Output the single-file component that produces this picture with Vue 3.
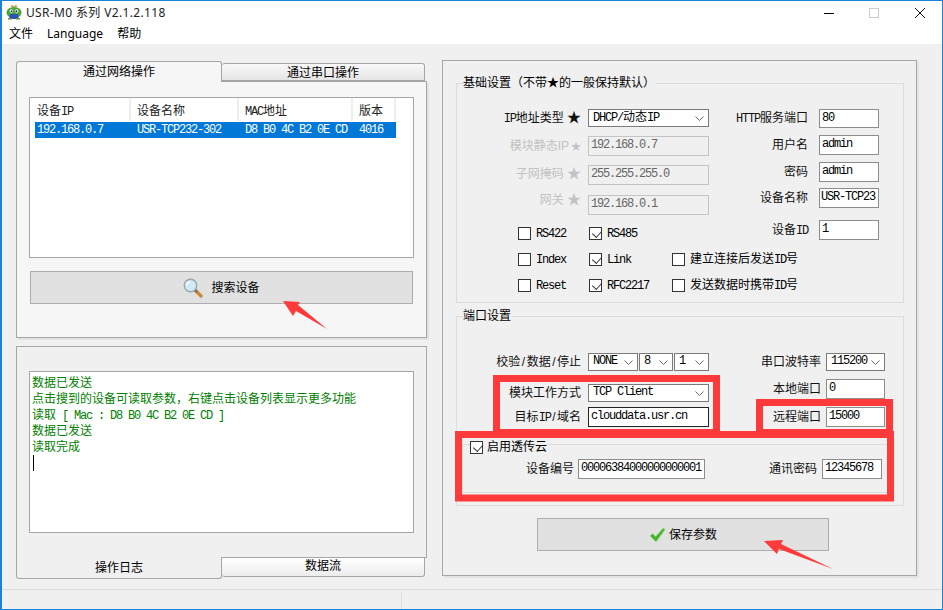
<script setup>
const rows = ['192.168.0.7', 'USR-TCP232-302', 'D8 B0 4C B2 0E CD', '4016']
</script>

<template>
  <div class="window">
    <header class="titlebar">
      <svg class="logo" width="16" height="16" viewBox="0 0 16 16">
        <path d="M5 3 L6 1 L8 2.5 L10 1 L11 3 Z" fill="#d9b95c" stroke="#a98f4a" stroke-width=".5" />
        <ellipse cx="8" cy="8.5" rx="7.5" ry="5.5" fill="#4aa53c" />
        <rect x="3.5" y="10" width="9" height="5" rx="1.5" fill="#2c52b8" />
        <circle cx="5.4" cy="7" r="1.8" fill="#fff" /><circle cx="10.6" cy="7" r="1.8" fill="#fff" />
        <circle cx="5.6" cy="7.2" r=".9" fill="#123" /><circle cx="10.4" cy="7.2" r=".9" fill="#123" />
        <rect x="2" y="14" width="4" height="1.5" fill="#6c8f3a" /><rect x="10" y="14" width="4" height="1.5" fill="#6c8f3a" />
      </svg>
      <span class="title">USR-M0 系列 V2.1.2.118</span>
      <div class="winbtns">
        <svg width="120" height="21" viewBox="0 0 120 21">
          <path d="M2 11.5H12" stroke="#000" fill="none" />
          <rect x="47.5" y="6.5" width="9" height="9" stroke="#ccc" fill="none" />
          <path d="M93 6L103 16M103 6L93 16" stroke="#111" fill="none" />
        </svg>
      </div>
    </header>
    <nav class="menubar">
      <span>文件</span><span>Language</span><span>帮助</span>
    </nav>

    <main class="main">
      <section class="leftcol">
        <div class="toptabs">
          <div class="tab tab-on">通过网络操作</div>
          <div class="tab tab-off">通过串口操作</div>
        </div>
        <div class="panel panel-net">
          <div class="listview">
            <div class="lv-head">
              <div>设备<span class="m">IP</span></div>
              <div>设备名称</div>
              <div><span class="m">MAC</span>地址</div>
              <div>版本</div>
            </div>
            <div class="lv-row">
              <div v-for="r in rows" :key="r" class="m">{{ r }}</div>
            </div>
          </div>
          <div class="bigbtn search-btn">
            <svg width="20" height="20" viewBox="0 0 20 20">
              <path d="M11.5 11.5L18 18" stroke="#c98a35" stroke-width="3.4" stroke-linecap="round" />
              <path d="M11.5 11.5L14 14" stroke="#777" stroke-width="3" />
              <circle cx="7.5" cy="7.5" r="6.2" fill="#cfe9f7" stroke="#9aa6ad" stroke-width="1.4" />
              <path d="M3.8 7a4 4 0 0 1 3.4-3.3" stroke="#fff" stroke-width="1.6" fill="none" />
            </svg>
            <span>搜索设备</span>
          </div>
        </div>
        <div class="panel panel-log">
          <div class="logbox">
            <div class="ln">数据已发送</div>
            <div class="ln">点击搜到的设备可读取参数，右键点击设备列表显示更多功能</div>
            <div class="ln">读取<span class="m"> [ Mac : D8 B0 4C B2 0E CD ]</span></div>
            <div class="ln">数据已发送</div>
            <div class="ln">读取完成</div>
            <div class="caret"></div>
          </div>
        </div>
        <div class="bottabs">
          <div class="btab btab-on">操作日志</div>
          <div class="btab btab-off">数据流</div>
        </div>
      </section>

      <section class="panel panel-right">
        <div class="group group-basic">
          <div class="legend">基础设置（不带★的一般保持默认）</div>
          <div class="cols">
            <div class="col-left">
              <div class="row r-basic1">
                <label class="lbl"><span class="m">IP</span>地址类型 <span class="star">★</span></label>
                <div class="select w121"><span class="m">DHCP/</span>动态<span class="m">IP</span><svg class="chev" width="9" height="5" viewBox="0 0 9 5"><path d="M.5.5L4.5 4.5L8.5.5" fill="none" stroke="#666" /></svg></div>
              </div>
              <div class="row r-basic2">
                <label class="lbl dis">模块静态IP<span class="star-s">★</span></label>
                <div class="input dis-in w121 m">192.168.0.7</div>
              </div>
              <div class="row r-basic2">
                <label class="lbl dis up2">子网掩码 <span class="star">★</span></label>
                <div class="input dis-in w121 m">255.255.255.0</div>
              </div>
              <div class="row r-basic3">
                <label class="lbl dis up6">网关 <span class="star">★</span></label>
                <div class="input dis-in w121 m">192.168.0.1</div>
              </div>
              <div class="checks c1">
                <div class="chk"><i class="box"></i><span class="m">RS422</span></div>
                <div class="chk"><i class="box on"></i><span class="m">RS485</span></div>
              </div>
            </div>
            <div class="col-right">
              <div class="rrow r-a"><label class="lbl"><span class="m">HTTP</span>服务端口</label><div class="input w60 m">80</div></div>
              <div class="rrow r-b"><label class="lbl">用户名</label><div class="input w60 m">admin</div></div>
              <div class="rrow r-c"><label class="lbl">密码</label><div class="input w60 m">admin</div></div>
              <div class="rrow r-c"><label class="lbl">设备名称</label><div class="input w60 m tight">USR-TCP23</div></div>
              <div class="rrow r-d"><label class="lbl">设备<span class="m">ID</span></label><div class="input w60 m">1</div></div>
            </div>
          </div>
          <div class="checks c2">
            <div class="chk"><i class="box"></i><span class="m">Index</span></div>
            <div class="chk"><i class="box on"></i><span class="m">Link</span></div>
            <div class="chk"><i class="box"></i><span>建立连接后发送<span class="m">ID</span>号</span></div>
          </div>
          <div class="checks c3">
            <div class="chk"><i class="box"></i><span class="m">Reset</span></div>
            <div class="chk"><i class="box on"></i><span class="m">RFC2217</span></div>
            <div class="chk"><i class="box"></i><span>发送数据时携带<span class="m">ID</span>号</span></div>
          </div>
        </div>

        <div class="group group-port">
          <div class="legend">端口设置</div>
          <div class="cols">
            <div class="col-left">
              <div class="row p1">
                <label class="lbl">校验<span class="sl">/</span>数据<span class="sl">/</span>停止</label>
                <div class="tri">
                  <div class="select w50 m">NONE<svg class="chev" width="9" height="5" viewBox="0 0 9 5"><path d="M.5.5L4.5 4.5L8.5.5" fill="none" stroke="#666" /></svg></div>
                  <div class="select w34 m">8<svg class="chev" width="9" height="5" viewBox="0 0 9 5"><path d="M.5.5L4.5 4.5L8.5.5" fill="none" stroke="#666" /></svg></div>
                  <div class="select w35 m">1<svg class="chev" width="9" height="5" viewBox="0 0 9 5"><path d="M.5.5L4.5 4.5L8.5.5" fill="none" stroke="#666" /></svg></div>
                </div>
              </div>
              <div class="row p2">
                <label class="lbl">模块工作方式</label>
                <div class="select w121 m">TCP Client<svg class="chev" width="9" height="5" viewBox="0 0 9 5"><path d="M.5.5L4.5 4.5L8.5.5" fill="none" stroke="#666" /></svg></div>
              </div>
              <div class="row p3">
                <label class="lbl">目标<span class="m">IP</span><span class="sl">/</span>域名</label>
                <div class="input focus w121 m">clouddata.usr.cn</div>
              </div>
            </div>
            <div class="col-right port-right">
              <div class="prow pr1">
                <label class="lbl">串口波特率</label>
                <div class="select w59 m">115200<svg class="chev" width="9" height="5" viewBox="0 0 9 5"><path d="M.5.5L4.5 4.5L8.5.5" fill="none" stroke="#666" /></svg></div>
              </div>
              <div class="prow pr2"><label class="lbl">本地端口</label><div class="input w59 m">0</div></div>
              <div class="prow pr3"><label class="lbl">远程端口</label><div class="input w59 m">15000</div></div>
            </div>
          </div>
          <div class="cloud">
            <div class="cloud-legend"><i class="box on"></i><span>启用透传云</span></div>
            <div class="cloud-row">
              <label class="lbl cl1">设备编号</label>
              <div class="input w127 m">00006384000000000001</div>
              <label class="lbl cl2">通讯密码</label>
              <div class="input w60 m">12345678</div>
            </div>
          </div>
        </div>

        <div class="bigbtn save-btn">
          <svg width="17" height="16" viewBox="0 0 18 17">
            <path d="M1 9.5L3.8 6.8L7 10L15 1L17.2 2.6L7.5 16Z" fill="#45b52f" stroke="#a9dd98" stroke-width=".8" />
          </svg>
          <span>保存参数</span>
        </div>
      </section>
    </main>

    <footer class="statusbar"><div class="status-a"></div><div class="status-b"></div></footer>

    <svg class="marks" width="943" height="610" viewBox="0 0 943 610">
      <g fill="none" stroke="#ff3a3a" stroke-width="7">
        <rect x="496.5" y="378.5" width="220" height="54" />
        <rect x="759.5" y="402.5" width="130" height="30" />
        <rect x="458.5" y="434.5" width="432" height="63.5" />
      </g>
      <g fill="#ff3a3a">
        <polygon points="283,301 300,302 298,305 327,329 296,311 293,316" />
        <polygon points="764,541 783,540 781,544 833,569 779,549 777,554" />
      </g>
    </svg>
  </div>
</template>

<style>
html, body { margin: 0; background: #fff; }
</style>

<style scoped>
.window {
  position: relative;
  box-sizing: border-box;
  width: 943px;
  height: 610px;
  border: 1px solid #1a84d8;
  border-left-width: 2px;
  background: #f0f0f0;
  display: flex;
  flex-direction: column;
  overflow: hidden;
  font: 12px/16px "Liberation Sans", "Noto Sans CJK SC", sans-serif;
  color: #000;
}
.m {
  font-family: "Liberation Mono", "Noto Sans CJK SC", monospace;
  letter-spacing: -1.2px;
  white-space: pre;
}
.sl { margin: 0 1.5px; }
.titlebar {
  height: 23px;
  background: #fff;
  display: flex;
  align-items: center;
  padding-left: 4px;
  flex: none;
}
.logo { flex: none; margin-top: -1px; }
.title {
  margin-left: 4px;
  font-family: "Noto Sans", "Noto Sans CJK SC", sans-serif;
  letter-spacing: .35px;
  color: #222;
}
.winbtns {
  margin-left: auto;
  width: 120px;
  height: 21px;
  display: flex;
}
.menubar {
  height: 20px;
  background: #fff;
  flex: none;
  display: flex;
  gap: 14px;
  padding-left: 7px;
  align-items: center;
  font-family: "Noto Sans", "Noto Sans CJK SC", sans-serif;
}
.main {
  flex: 1;
  display: flex;
  align-items: flex-start;
  padding: 16px 0 0 14px;
  gap: 15px;
}
.leftcol {
  width: 411px;
  margin-top: 1px;
  flex: none;
}
.toptabs {
  display: flex;
  height: 20px;
  align-items: flex-end;
  position: relative;
  z-index: 1;
}
.tab {
  box-sizing: border-box;
  text-align: center;
  border: 1px solid #a6a6a6;
  border-radius: 3px 3px 0 0;
}
.tab-on {
  width: 206px;
  height: 21px;
  margin-bottom: -1px;
  background: #f6f6f6;
  border-bottom: none;
  padding-top: 2px;
}
.tab-off {
  width: 203px;
  height: 18px;
  background: linear-gradient(#f8f8f8, #e6e6e6);
  border-left: none;
  line-height: 17px;
  padding-top: 1px;
}
.panel {
  box-sizing: border-box;
  border: 1px solid #a6a6a6;
  box-shadow: 2px 2px 0 #e2e2e2;
}
.panel-net {
  height: 257px;
  background: #f6f6f6;
  padding: 15px 12px 0;
}
.listview {
  box-sizing: border-box;
  height: 161px;
  background: #fff;
  border: 1px solid #a6a6a6;
  padding-left: 5px;
}
.lv-head, .lv-row {
  display: grid;
  grid-template-columns: 96px 108px 114px 43px;
  width: 361px;
}
.lv-head { height: 24px; }
.lv-head > div {
  border-right: 2px solid #eee;
  line-height: 27px;
  padding-left: 6px;
  height: 23px;
  color: #222;
}
.lv-head > div:first-child { padding-left: 2px; }
.lv-row {
  height: 16px;
  line-height: 16px;
  background: #0078d7;
  color: #fff;
}
.lv-row > div { padding-left: 6px; }
.lv-row > div:first-child { padding-left: 2px; }
.bigbtn {
  box-sizing: border-box;
  background: #e1e1e1;
  border: 1px solid #adadad;
  display: flex;
  align-items: center;
  justify-content: center;
}
.search-btn {
  height: 33px;
  width: 383px;
  margin: 13px 0 0 1px;
  gap: 8px;
}
.panel-log {
  margin-top: 8px;
  height: 212px;
  padding: 24px 12px 0;
  box-shadow: none;
}
.logbox {
  box-sizing: border-box;
  height: 162px;
  background: #fff;
  border: 1px solid #a6a6a6;
  padding: 3px 2px;
  color: #008000;
}
.ln { height: 16px; white-space: nowrap; }
.caret {
  width: 1px;
  height: 16px;
  background: #000;
  margin-left: 1px;
}
.bottabs {
  display: flex;
  align-items: flex-start;
  margin-top: -1px;
  position: relative;
}
.btab {
  box-sizing: border-box;
  text-align: center;
  border: 1px solid #a6a6a6;
  border-radius: 0 0 3px 3px;
}
.btab-on {
  width: 206px;
  height: 22px;
  background: #f0f0f0;
  border-top: none;
  padding-top: 3px;
}
.btab-off {
  width: 203px;
  height: 20px;
  background: linear-gradient(#fff, #ececec);
  border-left: none;
  line-height: 17px;
}
.panel-right {
  width: 475px;
  height: 516px;
  flex: none;
  padding: 22px 0 0 13px;
}
.group {
  position: relative;
  box-sizing: border-box;
  width: 448px;
  border: 1px solid #dcdcdc;
}
.group-basic { height: 220px; }
.group-port { height: 190px; margin-top: 13px; }
.legend {
  position: absolute;
  top: -9px;
  left: 6px;
  background: #f0f0f0;
  padding-right: 1px;
  white-space: nowrap;
}
.cols { display: flex; align-items: flex-start; }
.col-left { width: 252px; flex: none; }
.col-right { flex: 1; }
.row { display: flex; align-items: center; }
.lbl {
  display: block;
  text-align: right;
  white-space: nowrap;
  color: #111;
}
.row > .lbl { width: 124px; margin-right: 7px; }
.star { font-size: 14px; }
.star-s { font-size: 10px; margin-left: 2px; }
.dis { color: #c2c2c2; }
.up2 { margin-bottom: 4px; }
.up6 { margin-bottom: 12px; }
.select, .input {
  box-sizing: border-box;
  position: relative;
  flex: none;
  background: #fff;
  border: 1px solid #7a7a7a;
  white-space: pre;
}
.select {
  height: 18px;
  line-height: 15px;
  padding-left: 4px;
}
.input {
  height: 20px;
  line-height: 16px;
  padding-left: 2px;
  border-color: #8c8c8c;
}
.dis-in {
  border-color: #c4c4c4;
  background: #f0f0f0;
  color: #666;
}
.focus { border-color: #222; }
.tight { padding-left: 1px; overflow: hidden; }
.chev { position: absolute; right: 4px; top: 6px; }
.w121 { width: 121px; }
.w60 { width: 60px; }
.w59 { width: 59px; }
.w50 { width: 50px; }
.w34 { width: 34px; }
.w35 { width: 35px; }
.w127 { width: 127px; }
.r-basic1 { margin-top: 25px; height: 18px; }
.r-basic2 { margin-top: 9px; height: 20px; }
.r-basic3 { margin-top: 10px; height: 20px; }
.rrow, .prow { display: flex; align-items: center; }
.rrow > .lbl { width: 99px; margin-right: 11px; }
.r-a { margin-top: 25px; }
.r-a .input { height: 19px; }
.r-b { margin-top: 7px; }
.r-c { margin-top: 7px; }
.r-c + .r-c { margin-top: 6px; }
.r-d { margin-top: 12px; }
.checks {
  display: grid;
  grid-template-columns: 71px 83px auto;
  padding-left: 61px;
  height: 13px;
}
.c1 { margin-top: 12px; }
.c2 { margin-top: 13px; }
.c3 { margin-top: 13px; }
.chk { display: flex; align-items: center; gap: 5px; height: 13px; white-space: nowrap; }
.box {
  box-sizing: border-box;
  display: block;
  flex: none;
  width: 13px;
  height: 13px;
  border: 1px solid #333;
  background: #fff;
  position: relative;
}
.box.on::after {
  content: "";
  position: absolute;
  left: 2px;
  top: 0;
  width: 7px;
  height: 5px;
  border-left: 1px solid #333;
  border-bottom: 1px solid #333;
  transform: rotate(-48deg) translate(-1px, 2px);
}
.tri { display: flex; gap: 1px; }
.p1 { margin-top: 36px; height: 18px; }
.p2 { margin-top: 13px; height: 18px; }
.p3 { margin-top: 5px; height: 20px; }
.prow > .lbl { width: 112px; margin-right: 5px; }
.pr1 { margin-top: 36px; height: 18px; }
.pr2 { margin-top: 8px; }
.pr3 { margin-top: 8px; }
.cloud {
  position: relative;
  box-sizing: border-box;
  width: 432px;
  height: 49px;
  margin: 17px 0 0 5px;
  border: 1px solid #dcdcdc;
}
.cloud-legend {
  position: absolute;
  top: -6px;
  left: 7px;
  display: flex;
  align-items: center;
  gap: 4px;
  background: #f0f0f0;
}
.cloud-row {
  display: flex;
  align-items: center;
  margin-top: 14px;
}
.cl1 { width: 111px; margin-right: 4px; }
.cl2 { width: 112px; margin-right: 5px; }
.save-btn {
  width: 292px;
  height: 33px;
  margin: 12px 0 0 81px;
  gap: 3px;
}
.statusbar {
  flex: none;
  height: 19px;
  border-top: 1px solid #dcdcdc;
  display: flex;
}
.status-a { width: 399px; border-right: 1px solid #dcdcdc; margin-top: 2px; }
.status-b { flex: 1; }
.marks {
  position: absolute;
  left: -2px;
  top: -1px;
  pointer-events: none;
}
</style>
